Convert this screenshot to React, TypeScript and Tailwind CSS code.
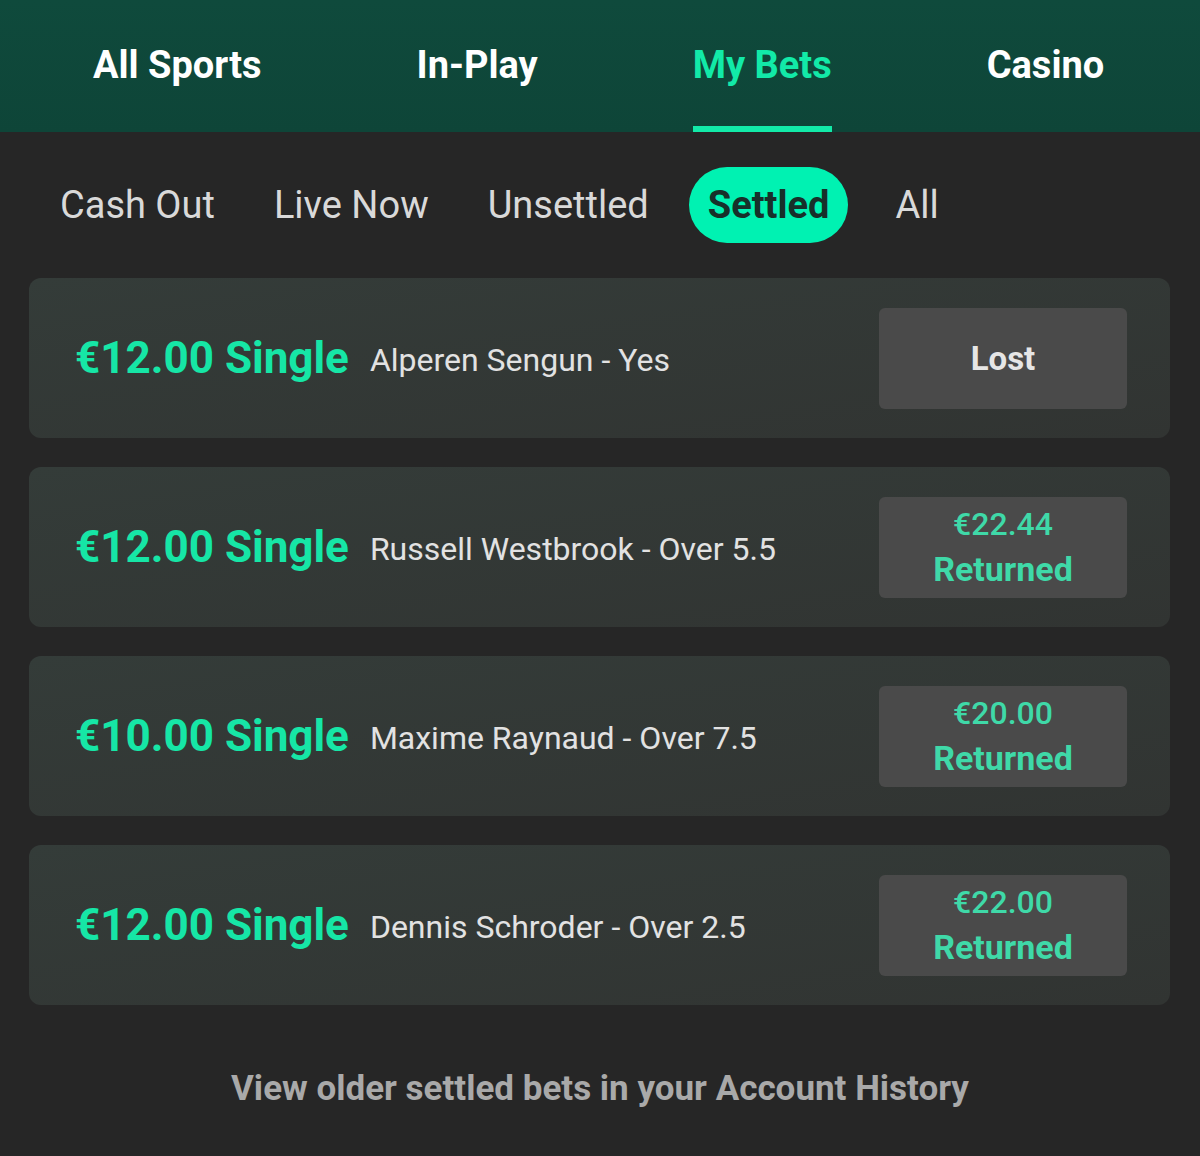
const topTabs = ["All Sports", "In-Play", "My Bets", "Casino"];
const subTabs = ["Cash Out", "Live Now", "Unsettled", "Settled", "All"];

type Bet = {
  stake: string;
  selection: string;
  result?: string;
};

const bets: Bet[] = [
  { stake: "€12.00", selection: "Alperen Sengun - Yes" },
  { stake: "€12.00", selection: "Russell Westbrook - Over 5.5", result: "€22.44" },
  { stake: "€10.00", selection: "Maxime Raynaud - Over 7.5", result: "€20.00" },
  { stake: "€12.00", selection: "Dennis Schroder - Over 2.5", result: "€22.00" },
];

export default function App() {
  return (
    <div
      className="min-h-[1156px] w-[1200px] bg-[#262626]"
      style={{ fontFamily: "Roboto, 'Liberation Sans', sans-serif" }}
    >
      {/* main nav */}
      <header className="flex h-[132px] items-stretch gap-[155px] bg-gradient-to-b from-[#0f4a3c] to-[#0e4538] pl-[93px]">
        {topTabs.map((tab) => {
          const active = tab === "My Bets";
          return (
            <div key={tab} className="relative flex items-center pb-[2px]">
              <span
                className={`text-[38px] font-bold leading-none ${
                  active ? "text-[#12eaa8]" : "text-white"
                }`}
              >
                {tab}
              </span>
              {active && <div className="absolute bottom-0 left-0 right-0 h-[6px] bg-[#12eaa8]" />}
            </div>
          );
        })}
      </header>

      {/* bet filters */}
      <nav className="flex items-center gap-[21px] pl-[41px] pb-[35px] pt-[35px]">
        {subTabs.map((tab) => {
          const active = tab === "Settled";
          return (
            <div
              key={tab}
              className={`flex h-[76px] items-center rounded-full px-[19px] text-[38px] leading-none ${
                active ? "bg-[#00f2b2] font-bold text-[#17302a]" : "text-[#d9d9d9]"
              } ${tab === "All" ? "ml-[7px]" : ""}`}
            >
              {tab}
            </div>
          );
        })}
      </nav>

      {/* settled bets */}
      <main className="flex flex-col gap-[29px] pl-[29px] pr-[30px]">
        {bets.map((bet, i) => (
          <div
            key={i}
            className="flex h-[160px] items-center rounded-[12px] bg-gradient-to-br from-[#343c39] to-[#313432] pl-[46px] pr-[43px]"
          >
            <span className="text-[44px] font-bold leading-none text-[#16e6a6]">{bet.stake} Single</span>
            <span className="ml-[21px] flex-1 pt-[4px] text-[32px] leading-none text-[#e2e2e2]">{bet.selection}</span>
            <div className="flex h-[101px] w-[248px] flex-col items-center justify-center rounded-[6px] bg-[#4a4a4a]">
              {bet.result ? (
                <>
                  <span className="text-[32px] font-medium leading-[45px] text-[#3fd9a8]">{bet.result}</span>
                  <span className="text-[34px] font-bold leading-[45px] text-[#3fd9a8]">Returned</span>
                </>
              ) : (
                <span className="text-[33px] font-bold leading-none text-[#e6e6e6]">Lost</span>
              )}
            </div>
          </div>
        ))}
      </main>

      <p className="pt-[66px] text-center text-[35px] font-bold leading-none text-[#a9a9a9]">
        View older settled bets in your Account History
      </p>
    </div>
  );
}
